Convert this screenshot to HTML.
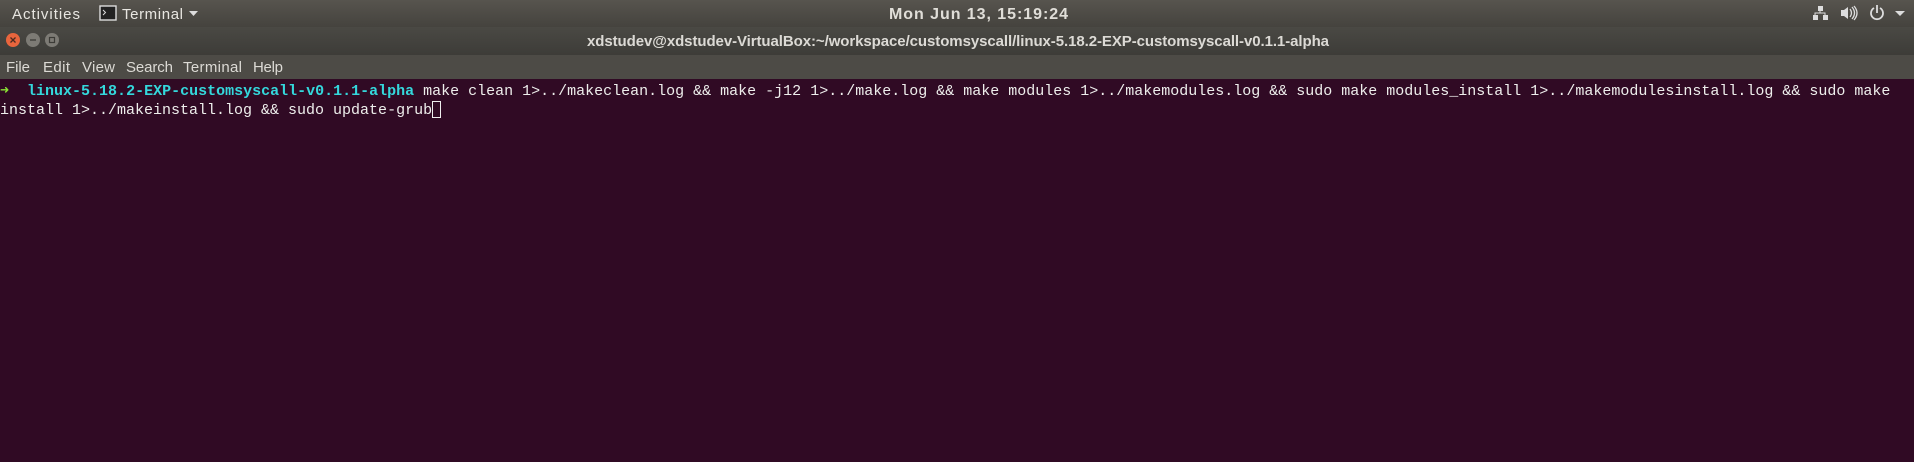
<!DOCTYPE html>
<html><head><meta charset="utf-8"><style>
html,body{margin:0;padding:0;width:1914px;height:462px;overflow:hidden;background:#300a24;}
#top{position:absolute;left:0;top:0;width:1914px;height:27px;background:linear-gradient(#57544e,#45433e);}
#title{position:absolute;left:0;top:27px;width:1914px;height:28px;background:linear-gradient(#4a4944,#3d3c38);}
#menu{position:absolute;left:0;top:55px;width:1914px;height:24px;background:#4d4b46;}
svg{position:absolute;left:0;top:0;}
pre{position:absolute;left:0;top:83px;margin:0;font-family:"Liberation Mono",monospace;font-size:15px;line-height:18px;color:#eeeeec;}
.c{color:#34d8dc;font-weight:bold}.g{color:#8ae234;font-weight:bold}
.cur{display:inline-block;width:9px;height:17px;border:1px solid #eee;box-sizing:border-box;vertical-align:-4px;}
</style></head><body>
<div id="top"></div><div id="title"></div><div id="menu"></div>
<svg width="1914" height="80" font-family="Liberation Sans, sans-serif">
<text x="12" y="19" fill="#e8e6e1" font-size="15" textLength="68">Activities</text>
<rect x="100" y="6" width="16" height="14" fill="#222" stroke="#ddd" stroke-width="1.4"/>
<path d="M103 10l2.5 2.5-2.5 2.5" stroke="#ddd" fill="none"/>
<text x="122" y="19" fill="#e8e6e1" font-size="15" textLength="61">Terminal</text>
<path d="M189 11h9l-4.5 5z" fill="#ddd"/>
<text x="889" y="19" fill="#e0ded8" font-size="16" textLength="179" font-weight="bold">Mon Jun 13, 15:19:24</text>
<g fill="#ddd">
<rect x="1818" y="6" width="5" height="5"/><rect x="1813" y="15" width="5" height="5"/><rect x="1823" y="15" width="5" height="5"/>
<path d="M1820 11v2M1815 15v-2h10v2" stroke="#ddd" fill="none"/>
<path d="M1841 10h3l4-3v12l-4-3h-3z"/>
<path d="M1850 9q3 4 0 8M1852 7q5 6 0 12M1854 6q6 7 0 14" stroke="#ddd" stroke-width="1.3" fill="none"/>
<path d="M1874 8a6 6 0 1 0 6 0M1877 5v8" stroke="#ddd" stroke-width="1.8" fill="none"/>
<path d="M1895 11h10l-5 5z"/>
</g>
<circle cx="13" cy="40" r="7" fill="#e9653d"/><path d="M10.5 37.5l5 5M15.5 37.5l-5 5" stroke="#4a2a20" stroke-width="1.3"/>
<circle cx="33" cy="40" r="7" fill="#7d7b75"/><path d="M30 40h6" stroke="#3c3b37" stroke-width="1.3"/>
<circle cx="52" cy="40" r="7" fill="#7d7b75"/><rect x="49.5" y="37.5" width="5" height="5" fill="none" stroke="#3c3b37" stroke-width="1.2"/>
<text x="587" y="46" fill="#dcdad5" font-size="15" font-weight="bold" textLength="742">xdstudev@xdstudev-VirtualBox:~/workspace/customsyscall/linux-5.18.2-EXP-customsyscall-v0.1.1-alpha</text>
<g fill="#dcdad5" font-size="15">
<text x="6" y="72" textLength="24">File</text>
<text x="43" y="72" textLength="27">Edit</text>
<text x="82" y="72" textLength="33">View</text>
<text x="126" y="72" textLength="47">Search</text>
<text x="183" y="72" textLength="59">Terminal</text>
<text x="253" y="72" textLength="30">Help</text>
</g>
</svg>
<pre><span class="g">➜</span>  <span class="c">linux-5.18.2-EXP-customsyscall-v0.1.1-alpha</span> make clean 1&gt;../makeclean.log &amp;&amp; make -j12 1&gt;../make.log &amp;&amp; make modules 1&gt;../makemodules.log &amp;&amp; sudo make modules_install 1&gt;../makemodulesinstall.log &amp;&amp; sudo make 
install 1&gt;../makeinstall.log &amp;&amp; sudo update-grub<span class="cur"></span></pre>
</body></html>
